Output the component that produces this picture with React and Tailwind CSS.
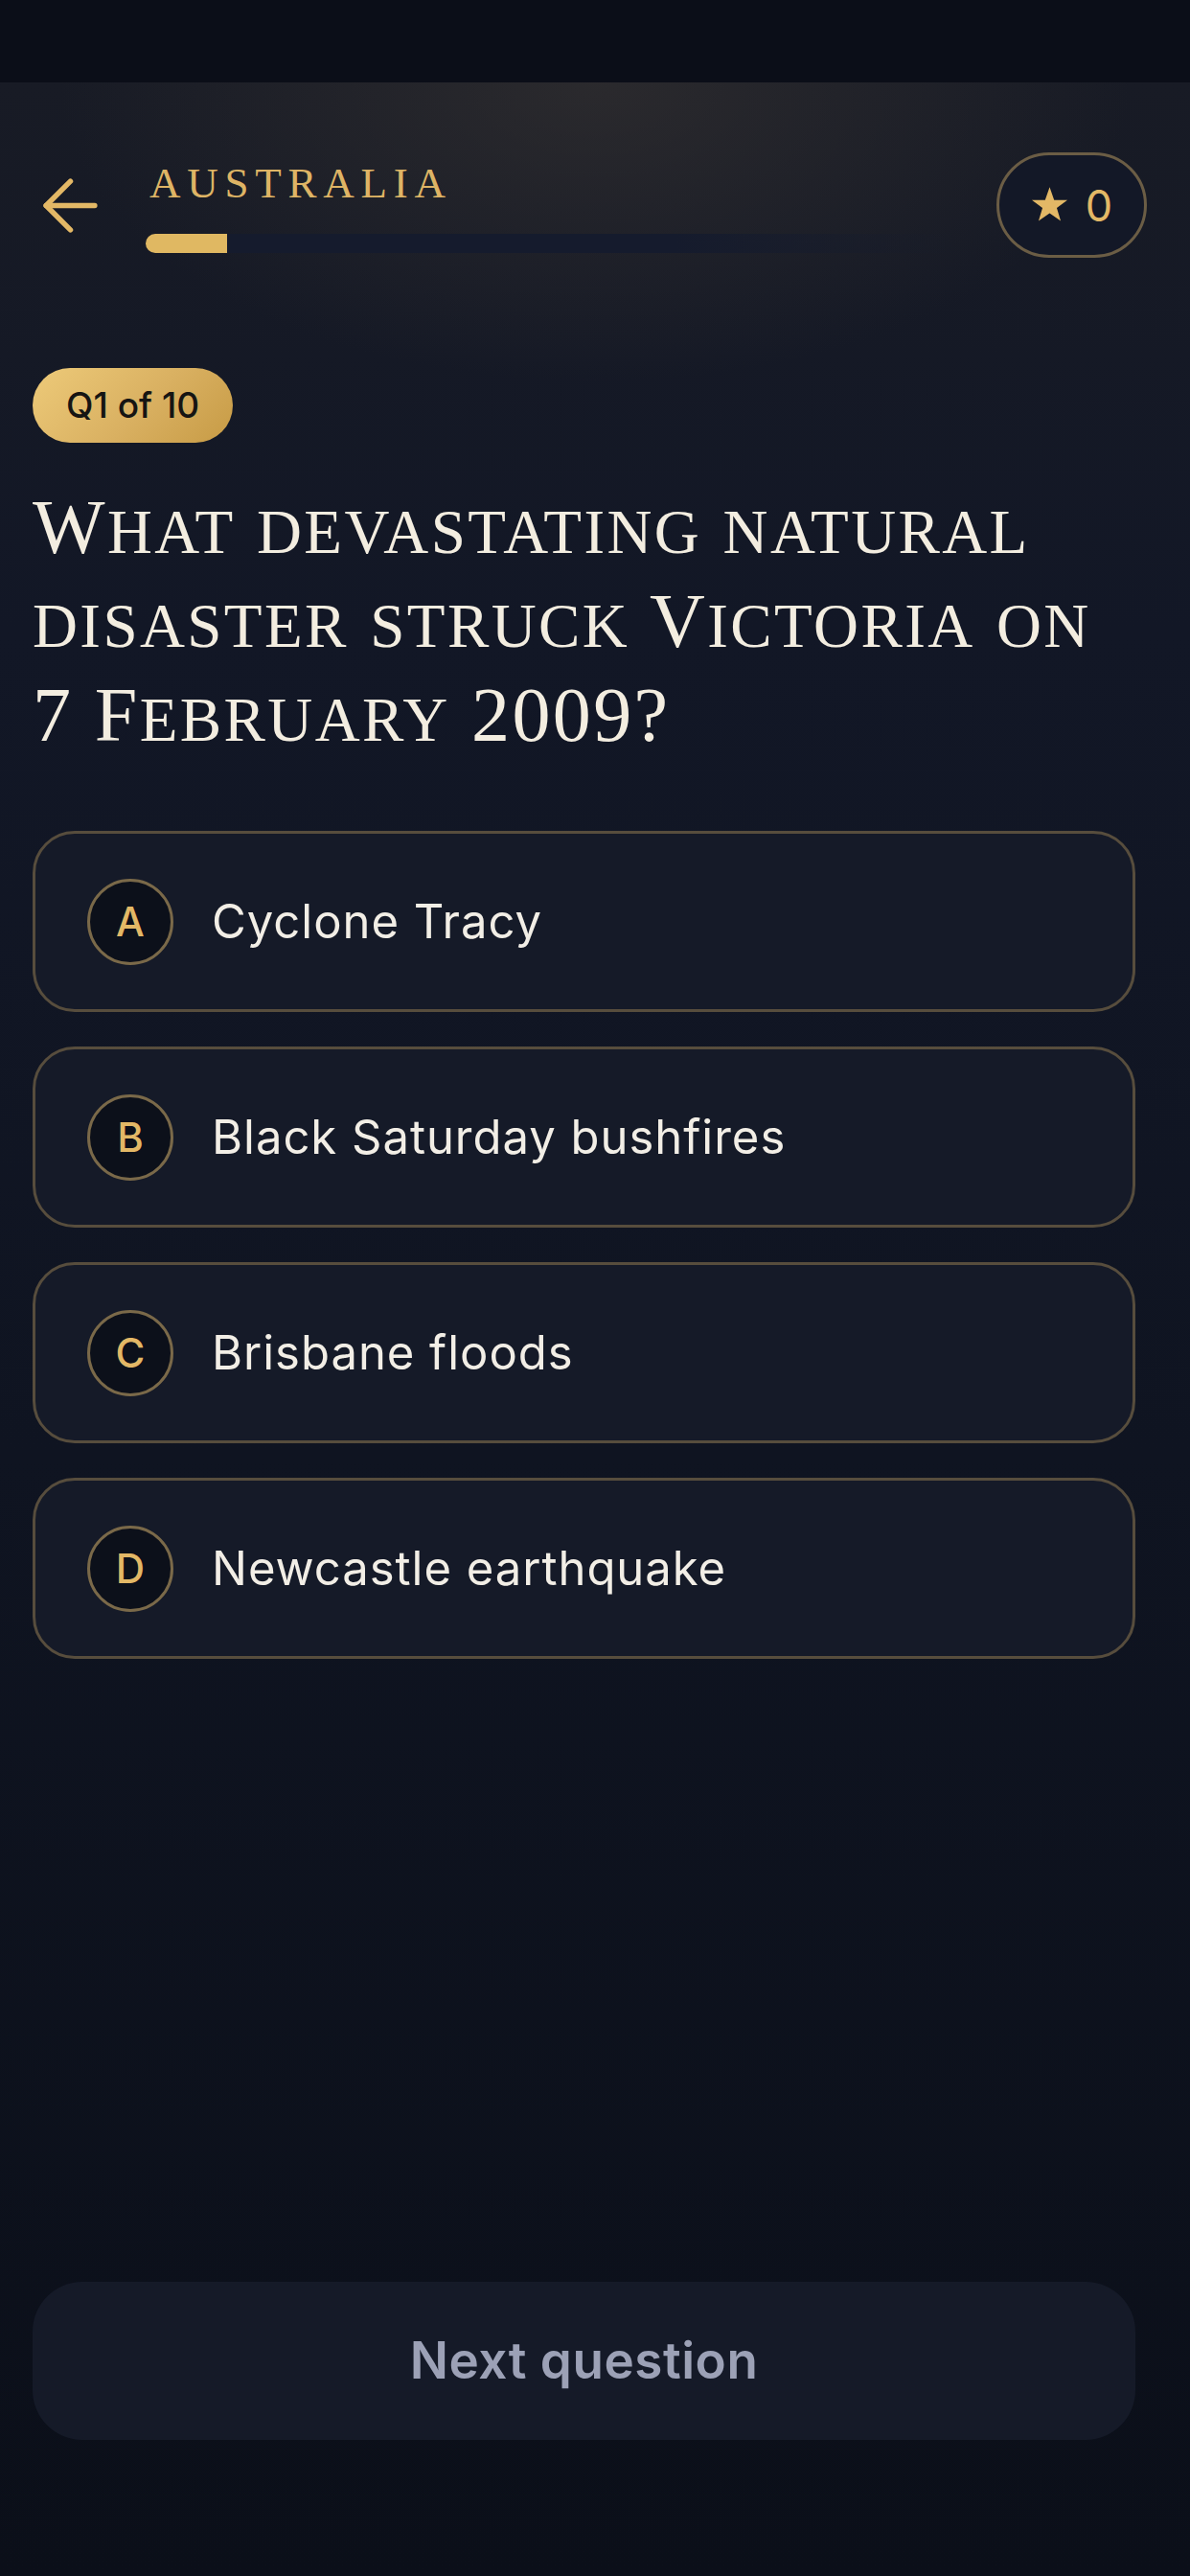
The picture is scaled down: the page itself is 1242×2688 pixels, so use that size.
import React from 'react';
import { ArrowLeft } from 'lucide-react';

const options = [
  { key: 'A', text: 'Cyclone Tracy' },
  { key: 'B', text: 'Black Saturday bushfires' },
  { key: 'C', text: 'Brisbane floods' },
  { key: 'D', text: 'Newcastle earthquake' },
];

const serif = "font-['Liberation_Serif','Times_New_Roman',serif]";
const sans = "font-['Inter','Noto_Sans',sans-serif]";

// small caps drawn by hand: capitals big, the rest uppercase at a smaller size
const Caps = ({ children }) => {
  const words = children.split(' ');
  return words.map((w, i) => (
    <React.Fragment key={i}>
      {i > 0 && ' '}
      {w.split('').map((ch, j) =>
        /[A-Z0-9?]/.test(ch) ? (
          <span key={j} className="text-[80px] leading-none">{ch}</span>
        ) : (
          <span key={j} className="text-[65px] leading-none">{ch.toUpperCase()}</span>
        )
      )}
    </React.Fragment>
  ));
};

const Star = () => (
  <svg width="39" height="38" viewBox="0 0 24 23" className="fill-[#e3b866]">
    <polygon points="12,0 14.9,8.2 23.4,8.3 16.6,13.4 19.1,21.7 12,16.8 4.9,21.7 7.4,13.4 0.6,8.3 9.1,8.2" />
  </svg>
);

const Option = ({ k, text }) => (
  <button className="flex h-[189px] w-full items-center gap-[40px] rounded-[44px] border-[3px] border-[#574d3d] bg-[#151a28] pl-[54px] text-left">
    <span className={`flex h-[90px] w-[90px] shrink-0 items-center justify-center rounded-full border-[3px] border-[#7a6949] bg-[#0c101a] text-[42px] font-medium text-[#e3b866] ${sans}`}>
      {k}
    </span>
    <span className={`text-[49px] text-[#f2eee6] tracking-[0.02em] ${sans}`}>{text}</span>
  </button>
);

export default function App() {
  return (
    <div className="flex h-[2688px] w-full flex-col bg-[#0b0f19]">
      <div className="h-[86px] shrink-0 bg-[#0b0e18]" />
      <main className="flex flex-1 flex-col bg-[radial-gradient(ellipse_45%_12%_at_50%_0%,rgba(58,54,52,0.55),transparent),linear-gradient(180deg,#181b25_0%,#121726_22%,#0f1421_55%,#0b0f19_100%)]">
        <header className="flex items-center pl-[30px] pr-[45px] pt-[73px]">
          <ArrowLeft size={87} strokeWidth={1.5} className="shrink-0 text-[#e3b866]" />
          <div className="ml-[35px] flex flex-1 flex-col">
            <span className={`pl-[4px] text-[45px] leading-[54px] tracking-[0.15em] text-[#deb465] ${serif}`}>AUSTRALIA</span>
            <div className="mt-[26px] h-[20px] w-[850px] overflow-hidden rounded-full bg-[linear-gradient(90deg,#151b2d_0%,#151b2d_65%,rgba(21,27,45,0)_100%)]">
              <div className="h-full w-[85px] bg-[#e0b862]" />
            </div>
          </div>
          <div className={`flex h-[110px] w-[157px] shrink-0 items-center justify-center gap-[18px] rounded-full border-[3px] border-[#6b5d45] bg-[#131827] ${sans}`}>
            <Star />
            <span className="text-[45px] leading-none text-[#e3b866]">0</span>
          </div>
        </header>

        <section className="pl-[34px] pr-[57px] pt-[115px]">
          <span className={`inline-flex h-[78px] items-center rounded-full bg-[linear-gradient(135deg,#edca79_0%,#d9b061_55%,#c79b45_100%)] px-[35px] text-[37px] font-medium text-[#161513] ${sans}`}>
            Q1 of 10
          </span>
          <h1 className={`mt-[39px] text-[80px] font-normal leading-[98px] tracking-[0.03em] text-[#f3ede0] ${serif}`}>
            <Caps>What devastating natural</Caps>
            <br />
            <Caps>disaster struck Victoria on</Caps>
            <br />
            <Caps>7 February 2009?</Caps>
          </h1>
        </section>

        <section className="mt-[72px] flex flex-col gap-[36px] pl-[34px] pr-[57px]">
          {options.map((o) => (
            <Option key={o.key} k={o.key} text={o.text} />
          ))}
        </section>

        <div className="mt-auto pb-[142px] pl-[34px] pr-[57px]">
          <button className={`flex h-[165px] w-full items-center justify-center rounded-[52px] bg-[#151a28] text-[53px] font-semibold tracking-[0.01em] text-[#9ca1b6] ${sans}`}>
            Next question
          </button>
        </div>
      </main>
    </div>
  );
}
